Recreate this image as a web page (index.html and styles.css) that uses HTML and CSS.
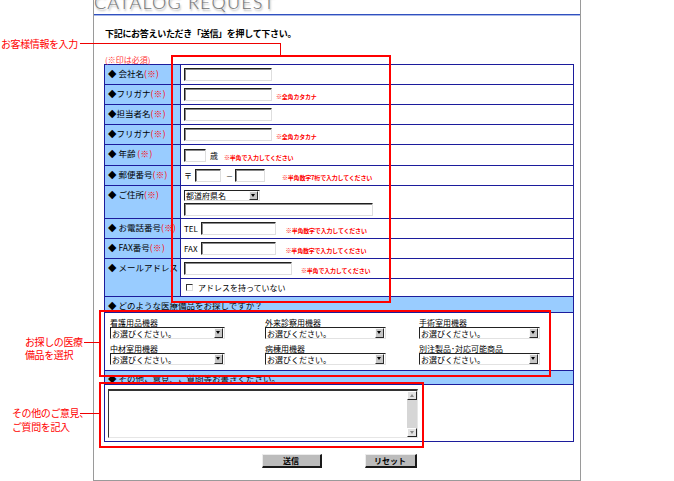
FILE: index.html
```html
<!DOCTYPE html>
<html lang="ja">
<head>
<meta charset="utf-8">
<title>CATALOG REQUEST</title>
<link rel="stylesheet" href="styles.css">
</head>
<body>
<div class="page">
  <div class="panel">
    <header class="masthead"><h1 class="title">CATALOG REQUEST</h1></header>
    <p class="lead">下記にお答えいただき「送信」を押して下さい。</p>
    <p class="req">(※印は必須)</p>

    <form class="order">
      <div class="sheet">
        <div class="lbl">◆ 会社名<em>(※)</em></div>
        <div class="val"><input class="txt w88" type="text"></div>

        <div class="lbl">◆フリガナ<em>(※)</em></div>
        <div class="val"><input class="txt w88" type="text"><span class="note ml4">※全角カタカナ</span></div>

        <div class="lbl">◆担当者名<em>(※)</em></div>
        <div class="val"><input class="txt w88" type="text"></div>

        <div class="lbl">◆フリガナ<em>(※)</em></div>
        <div class="val"><input class="txt w88" type="text"><span class="note ml4">※全角カタカナ</span></div>

        <div class="lbl">◆ 年齢 <em>(※)</em></div>
        <div class="val"><input class="txt w22" type="text"><span class="unit">歳</span><span class="note ml6">※半角で入力してください</span></div>

        <div class="lbl">◆ 郵便番号<em>(※)</em></div>
        <div class="val"><span class="pre">〒</span><input class="txt w26" type="text"><span class="dash">－</span><input class="txt w30" type="text"><span class="note ml17">※半角数字7桁で入力してください</span></div>

        <div class="lbl">◆ ご住所<em>(※)</em></div>
        <div class="val stack">
          <div class="pick w76">
            <select><option>都道府県名</option></select>
            <span class="drop"></span>
          </div>
          <input class="txt w189" type="text">
        </div>

        <div class="lbl">◆ お電話番号<em>(※)</em></div>
        <div class="val"><span class="pre tel">TEL</span><input class="txt w75" type="text"><span class="note ml10">※半角数字で入力してください</span></div>

        <div class="lbl">◆ FAX番号<em>(※)</em></div>
        <div class="val"><span class="pre fax">FAX</span><input class="txt w75" type="text"><span class="note ml10">※半角数字で入力してください</span></div>

        <div class="lbl tall">◆ メールアドレス</div>
        <div class="val"><input class="txt w108" type="text"><span class="note ml9">※半角で入力してください</span></div>
        <div class="val"><label class="check"><input type="checkbox"><span>アドレスを持っていない</span></label></div>

        <div class="head">◆ どのような医療備品をお探しですか？</div>
        <div class="val goods">
          <div class="item">
            <span class="cap">看護用品機器</span>
            <div class="pick w115"><select><option>お選びください。</option></select><span class="drop"></span></div>
          </div>
          <div class="item">
            <span class="cap">外来診察用機器</span>
            <div class="pick w121"><select><option>お選びください。</option></select><span class="drop"></span></div>
          </div>
          <div class="item">
            <span class="cap">手術室用機器</span>
            <div class="pick w121"><select><option>お選びください。</option></select><span class="drop"></span></div>
          </div>
          <div class="item">
            <span class="cap">中材室用機器</span>
            <div class="pick w115"><select><option>お選びください。</option></select><span class="drop"></span></div>
          </div>
          <div class="item">
            <span class="cap">病棟用機器</span>
            <div class="pick w121"><select><option>お選びください。</option></select><span class="drop"></span></div>
          </div>
          <div class="item">
            <span class="cap">別注製品･対応可能商品</span>
            <div class="pick w121"><select><option>お選びください。</option></select><span class="drop"></span></div>
          </div>
        </div>

        <div class="head">◆ その他ご意見、ご質問等お書きください。</div>
        <div class="val top">
          <div class="memo">
            <textarea></textarea>
            <div class="vbar">
              <span class="arrow up"></span>
              <span class="track"></span>
              <span class="arrow down"></span>
            </div>
          </div>
        </div>
      </div>

      <div class="actions">
        <button type="submit" class="btn btn-send">送信</button>
        <button type="reset" class="btn btn-reset">リセット</button>
      </div>
    </form>
  </div>

  <!-- guide notes drawn over the form -->
  <span class="tag tag-info">お客様情報を入力</span>
  <span class="wire wire-info-h"></span>
  <span class="wire wire-info-v"></span>
  <span class="mark mark-info"></span>

  <span class="tag tag-goods"><span class="row">お探しの医療</span><span class="row">備品を選択</span></span>
  <span class="wire wire-goods"></span>
  <span class="mark mark-goods"></span>

  <span class="tag tag-memo"><span class="row">その他のご意見、</span><span class="row">ご質問を記入</span></span>
  <span class="wire wire-memo"></span>
  <span class="mark mark-memo"></span>
</div>
</body>
</html>
```

FILE: styles.css
```css
* { box-sizing: border-box; }

html, body {
  margin: 0;
  padding: 0;
  background: #fff;
}

body {
  font-family: "Noto Sans CJK JP", sans-serif;
  font-size: 8px;
  color: #000;
}

.page {
  position: relative;
  width: 674px;
  height: 481px;
  overflow: hidden;
}

/* main sheet with grey frame */
.panel {
  margin-left: 93px;
  width: 488px;
  height: 481px;
  border: 1px solid #9a9a9a;
  border-top: 0;
}

.masthead {
  height: 15px;
  border-bottom: 1px solid #3050bf;
  box-shadow: 0 1px 0 #a8b8e8;
  overflow: hidden;
}

.title {
  margin: -7px 0 0 0;
  font: 300 18px/18px Lato, "Open Sans", sans-serif;
  letter-spacing: 1.2px;
  color: #727272;
  text-shadow: 1px 2px 2px rgba(0, 0, 0, 0.35);
  white-space: nowrap;
}

.lead {
  margin: 13px 0 0 11px;
  font-size: 9px;
  line-height: 11px;
  font-weight: 700;
  letter-spacing: -0.3px;
}

.req {
  margin: 16px 0 0 11px;
  font-size: 8px;
  line-height: 9px;
  color: #f33;
}

/* form table */
.sheet {
  display: grid;
  grid-template-columns: 75px 392px;
  grid-template-rows: 19px 19px 19px 19px 20px 19px 32px 19px 19px 19px 17px 15px 57px 13px 56px;
  gap: 1px;
  padding: 1px;
  width: 470px;
  margin-left: 10px;
  background: #1c1c9c;
}

.lbl {
  background: #99ccff;
  padding: 3px 0 0 3px;
  font-size: 8.5px;
  line-height: 11px;
  white-space: nowrap;
}

.lbl em {
  font-style: normal;
  color: #f00;
  letter-spacing: 0.4px;
}

.lbl.tall { grid-row: span 2; }

.head {
  grid-column: 1 / -1;
  background: #99ccff;
  padding-left: 3px;
  font-size: 8.5px;
  display: flex;
  align-items: center;
  white-space: nowrap;
}

.val {
  background: #fff;
  display: flex;
  align-items: center;
  padding-left: 3px;
  font-size: 8px;
  white-space: nowrap;
}

.val.stack {
  flex-direction: column;
  align-items: flex-start;
  justify-content: flex-start;
  gap: 2px;
  padding-top: 4px;
}

.val.top {
  grid-column: 1 / -1;
  align-items: flex-start;
  padding-top: 4px;
}

/* text fields */
.txt {
  height: 13px;
  margin: 0;
  padding: 0 2px;
  border: 1px solid;
  border-color: #1e1e1e #dedede #dedede #1e1e1e;
  box-shadow: inset 1px 1px 0 #8a8a8a;
  background: #fff;
  font: 8px "Noto Sans CJK JP", sans-serif;
  outline: none;
}

.w22 { width: 22px; }
.w26 { width: 26px; }
.w30 { width: 30px; }
.w75 { width: 75px; }
.w76 { width: 76px; }
.w88 { width: 88px; }
.w108 { width: 108px; }
.w115 { width: 115px; }
.w121 { width: 121px; }
.w189 { width: 189px; }

.note {
  align-self: flex-end;
  margin-bottom: 3px;
  color: #f00;
  font-size: 6px;
  line-height: 8px;
  font-weight: 700;
  letter-spacing: -0.2px;
}

.ml4 { margin-left: 4px; }
.ml6 { margin-left: 6px; }
.ml9 { margin-left: 9px; }
.ml10 { margin-left: 10px; }
.ml17 { margin-left: 17px; }

.unit { margin-left: 4px; }
.pre { margin-right: 3px; }
.dash { margin: 0 2px 0 5px; font-size: 7px; }

/* drop-down boxes */
.pick {
  display: flex;
  height: 11px;
  border: 1px solid;
  border-color: #222 #e2e2e2 #e2e2e2 #222;
  background: #fff;
}

.goods .pick { height: 12px; }

.pick select {
  -webkit-appearance: none;
  appearance: none;
  flex: 1;
  min-width: 0;
  height: 100%;
  margin: 0;
  padding: 0 1px;
  border: 0;
  background: transparent;
  color: #000;
  font: 8px/9px "Noto Sans CJK JP", sans-serif;
  outline: none;
}

.drop {
  position: relative;
  width: 9px;
  margin: 0 1px 0 0;
  background: #c6c6c6;
  border: 1px solid;
  border-color: #fafafa #2a2a2a #2a2a2a #fafafa;
}

.drop::after {
  content: "";
  position: absolute;
  left: 1px;
  top: 2px;
  border-top: 3px solid #000;
  border-left: 2.5px solid transparent;
  border-right: 2.5px solid transparent;
}

/* checkbox line */
.check {
  display: flex;
  align-items: center;
}

.check input {
  -webkit-appearance: none;
  appearance: none;
  width: 7px;
  height: 7px;
  margin: 0 5px 0 2px;
  border: 1px solid;
  border-color: #333 #ddd #ddd #333;
  background: #fff;
}

/* equipment pickers */
.goods {
  grid-column: 1 / -1;
  display: grid;
  grid-template-columns: 155px 154px 1fr;
  row-gap: 5px;
  align-content: start;
  padding: 5px 0 0 5px;
}

.item {
  display: flex;
  flex-direction: column;
}

.cap {
  font-size: 8px;
  line-height: 9px;
}

/* comment box */
.memo {
  display: flex;
  width: 310px;
  height: 49px;
  border-style: solid;
  border-width: 2px 1px 1px 1px;
  border-color: #333 #e6e6e6 #e6e6e6 #333;
  background: #fff;
}

.memo textarea {
  flex: 1;
  min-width: 0;
  margin: 0;
  padding: 1px 2px;
  border: 0;
  resize: none;
  overflow: hidden;
  outline: none;
  font: 8px "Noto Sans CJK JP", sans-serif;
}

.vbar {
  width: 10px;
  display: flex;
  flex-direction: column;
  background: #d6d6d6;
}

.vbar .track { flex: 1; }

.vbar .arrow {
  position: relative;
  height: 9px;
  background: #e2e2e2;
  border: 1px solid;
  border-color: #fff #222 #222 #fff;
}

.vbar .arrow::after {
  content: "";
  position: absolute;
  left: 1.5px;
  top: 2px;
  border-left: 2.5px solid transparent;
  border-right: 2.5px solid transparent;
}

.vbar .up::after { border-bottom: 3px solid #888; }
.vbar .down::after { border-top: 3px solid #888; }

/* buttons */
.actions {
  display: flex;
  justify-content: center;
  gap: 43px;
  width: 470px;
  margin: 12px 0 0 10px;
}

.btn {
  height: 14px;
  padding: 0;
  border-style: solid;
  border-width: 1px 2px 2px 1px;
  border-color: #ececec #1a1a1a #1a1a1a #ececec;
  background: #bcbcbc;
  color: #000;
  font: 700 8px/10px "Noto Sans CJK JP", sans-serif;
}

.btn-send { width: 60px; }
.btn-reset { width: 52px; }

/* guide annotations */
.mark {
  position: absolute;
  border: 2px solid #f00;
}

.wire {
  position: absolute;
  height: 1px;
  background: #e00;
}

.tag {
  position: absolute;
  color: #f00;
  font-size: 10px;
  line-height: 13px;
  letter-spacing: -0.4px;
  white-space: nowrap;
}

.tag .row {
  display: block;
  height: 13px;
  line-height: 12px;
}

.tag-info { left: 1px; top: 37px; }
.wire-info-h { left: 80px; top: 43px; width: 201px; }
.wire-info-v { left: 280px; top: 43px; width: 1px; height: 12px; }
.mark-info { left: 171px; top: 55px; width: 220px; height: 248px; }

.tag-goods { left: 25px; top: 336px; }
.wire-goods { left: 84px; top: 342px; width: 15px; }
.mark-goods { left: 99px; top: 310px; width: 452px; height: 67px; }

.tag-memo { left: 12px; top: 407px; }
.tag-memo .row { height: 14px; }
.wire-memo { left: 80px; top: 413px; width: 19px; }
.mark-memo { left: 99px; top: 382px; width: 325px; height: 66px; }
```
